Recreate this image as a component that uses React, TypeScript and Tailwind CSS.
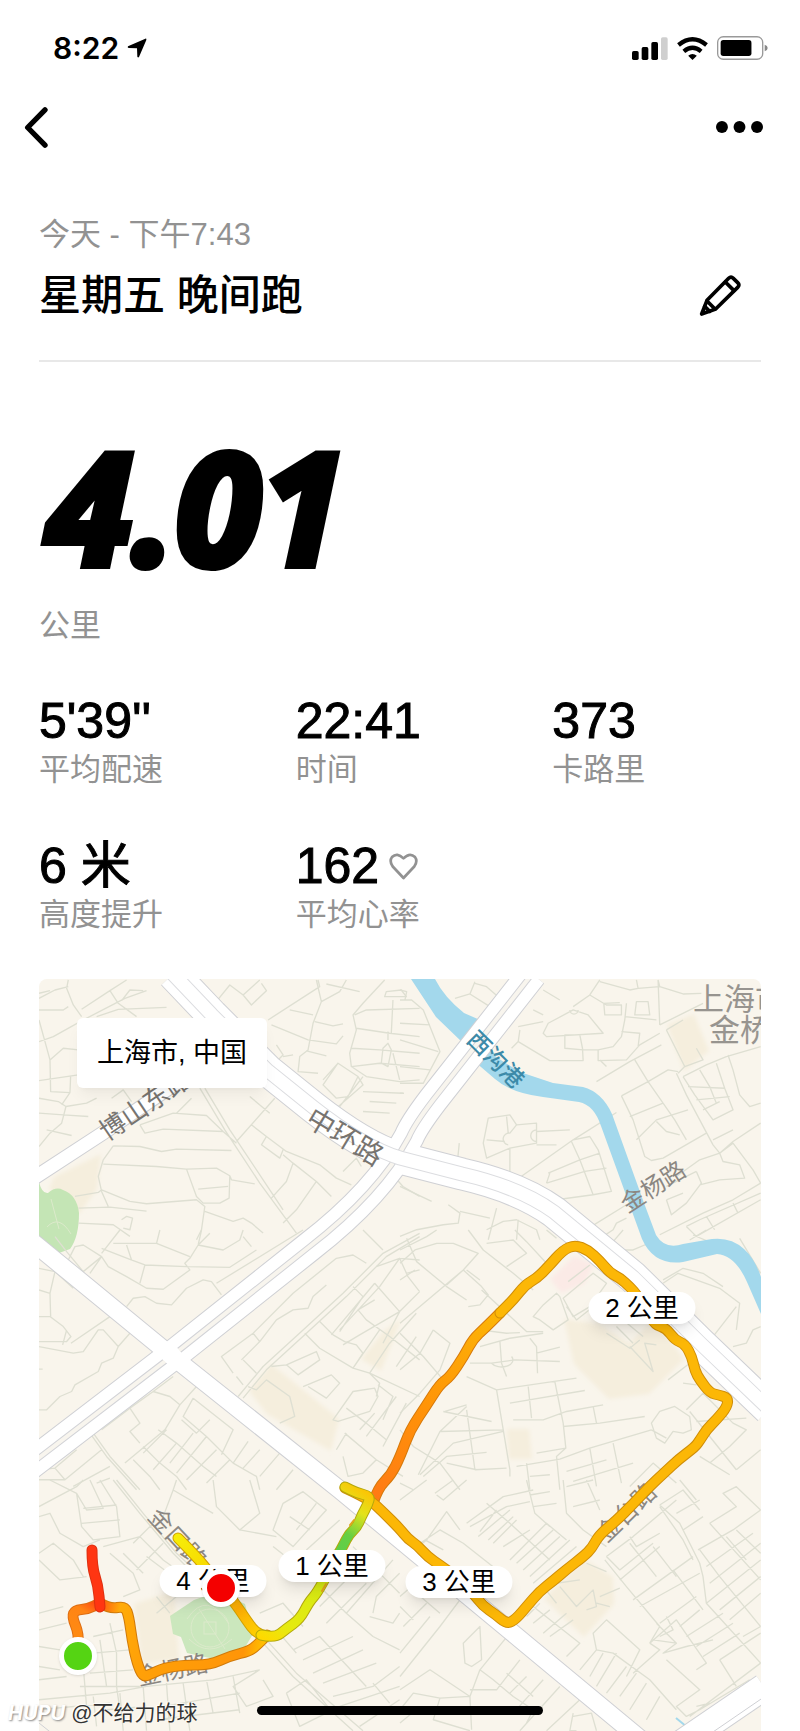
import React from "react";

const MAP_WIDTH = 722;
const MAP_HEIGHT = 752;

type Point = [number, number];

const stats = [
  { value: "5'39''", label: "平均配速" },
  { value: "22:41", label: "时间" },
  { value: "373", label: "卡路里" },
  { value: "6 米", label: "高度提升" },
  { value: "162", label: "平均心率", heart: true },
];

const kmMarkers = [
  { text: "4 公里", x: 174, y: 602 },
  { text: "1 公里", x: 293, y: 587 },
  { text: "2 公里", x: 603, y: 329 },
  { text: "3 公里", x: 420, y: 603 },
];

// Minor streets, one tile of the map per entry; tiles are drawn at a third of their own units.
const streetTiles = [
  {
    x: -9,
    y: -9,
    d: "M27 85L75 60L115 50M27 70L60 62M115 30L110 55L130 105L155 140M27 120L100 120L115 110M27 215L70 200L160 150L285 85L350 62M155 118L240 62L290 30M240 62L265 100L320 140M200 140L265 118L410 112M275 92L300 60L340 62M27 150L45 215L60 270L100 235L145 240M60 270L62 365L120 368L122 320M27 332L145 315M95 405L120 368M27 385L85 395L108 410M108 410L170 400L200 385M27 430L100 435L175 440M108 410L95 460L60 490L27 530M50 480L125 497M245 385L280 360L305 395M330 465L345 490L400 478L580 485M330 465L430 430L530 437L580 485L620 520M250 528L330 530L395 545L440 538L605 542M250 528L220 570L205 620L215 665L235 710M220 583L380 590L470 598L560 595L600 618L605 630L675 642M600 618L598 685L570 700L520 700L500 680L470 598M505 658L595 650M215 660L300 695L350 702L500 690L525 710L515 780L500 810M525 725L610 755L640 745L665 760L700 790M135 680L205 668L215 660M145 715L240 712L350 724M145 760L250 765L300 800M275 750L290 740L308 745L300 780L280 775M510 355L585 480L690 640L800 790M525 355L600 480L720 660L760 720M620 515L735 385M660 380L720 430M665 465L710 500L770 545L870 585L920 625L965 645M710 500L695 525L750 565L760 540M760 555L790 580L770 635L725 685M790 580L860 635L905 680M860 635L800 720L760 760M440 430L485 385M555 100L600 45L640 75L690 30M640 75L665 105L710 62L695 40M715 150L870 50L865 30M860 30L875 95L850 160L835 240L810 260L805 305L865 310M875 95L930 65L950 30M780 120L850 135M855 155L910 168L940 162M725 165L835 210L920 222L940 198M830 243L890 258M890 42L990 65M1065 30L1000 100L970 135L980 180L960 250L965 290L1010 320L1110 335L1170 330M975 135L1010 120L1170 115M980 175L1080 190L1170 200M965 235L1050 240L1170 250M965 290L1050 280L1170 290M1075 185L1075 210M1060 235L1055 280L1075 290L1085 240L1075 220ZM1090 90L1085 190M1090 250L1110 330M1065 80L1070 65L1115 60L1130 80ZM880 330L925 280L985 320L1000 345L920 415M925 280L880 345L920 385L955 380L985 320M1000 320L930 410M1000 365L1120 370M1020 395L1100 400M1000 425L1080 430M740 225L760 255L740 275M760 260L790 255M940 605L980 565L995 590M1085 610L1120 650L1170 680",
  },
  {
    x: 361,
    y: -9,
    d: "M0 90L35 90L70 120L120 245L70 340L0 340M0 60L20 65L15 90M0 160L90 165M0 210L115 245M0 290L90 300M0 370L12 370M165 85L210 72L225 35M210 72L270 110M225 40L260 50L300 85M430 60L480 90M400 120L430 135M355 170L430 155M360 180L355 215L450 272L550 272L548 235L540 195L495 195L495 235L550 240L595 240L595 272L680 270L720 225L780 190M335 235L355 215M430 190L445 160L520 120L565 135L610 190L440 200ZM510 120A12 12 0 1 0 535 120M520 110L570 75L600 30M570 75L620 105L665 105L665 135L615 135L612 100L660 98M710 30L715 55L690 60L600 35M715 55L780 50L850 72L905 70M775 30L780 165M780 50L775 30M710 95L745 95L750 135L705 135ZM680 100L675 150L665 200L640 230L595 240M675 140L770 150M665 185L720 190L715 230M600 270L620 290M780 165L860 125L910 100M800 180L850 150M800 180L855 290L835 310M855 290L910 270L890 235M590 335L690 275L785 225M705 270L745 335L790 400M665 378L745 335L805 300L835 305M665 378L700 450L735 560L755 572L790 565L920 490M690 440L790 400L825 450L860 510M710 510L770 450L865 420M770 455L800 485L840 495M830 310L860 375L900 450L940 525L960 550M850 320L920 285L980 260L1083 230M850 320L885 375L940 450L1000 420L975 355L950 280M900 300L930 350L950 400M865 350L975 355M890 390L990 380M910 420L960 395M985 255L1000 300L1020 375L1050 410L1083 400M1083 460L1000 515L960 550L900 570L830 620M940 510L1000 480M960 550L1000 520L1060 600L1083 640M960 550L970 575L1020 585L1035 625L960 630L900 645M1083 640L1000 690L910 730L780 795M890 605L905 640L860 700L815 735L800 690M890 605L800 650M800 690L850 670M860 770L900 750L1083 670M860 770L890 800L1083 690M920 740L945 780M1000 700L1015 730M250 520L265 445L330 435L350 465L410 460L410 520L330 535L260 565ZM260 510L315 515M320 440L325 490M350 465L330 490A15 15 0 1 0 325 525M410 480A15 15 0 1 0 410 515M410 485L510 480M410 525L470 525M330 535L330 610L345 630M178 520L172 580M350 630L520 510L650 428M515 515L540 570L580 675M520 510L570 500L595 540L635 665L580 675L470 690M445 610L540 570L600 550M440 640L555 605L620 595M450 610L440 640M0 650L95 695M145 705L180 730L175 760L130 765L50 780L0 800M180 725L270 745M290 715L265 810M260 780L310 755L350 750L410 780L420 810M355 750L350 810M575 770L680 705M610 800L640 780L650 760L680 745",
  },
  {
    x: -9,
    y: 251,
    d: "M27 115L75 125L60 190L62 260L27 260M75 125L130 175M27 180L60 190M60 260L100 290L123 320L110 335L27 335M27 350L130 370L160 365L205 300L220 300L265 350M110 300L98 345M123 340L240 260M300 310L265 350L250 385L215 400L205 425L135 465L125 485L90 500L50 540L27 540M27 418L38 418M75 20L110 65L160 125L215 80M110 100L135 50L160 45L215 80L235 110L290 140L350 175L400 178L480 120L465 100L480 85L505 45L515 0M215 70L270 0M180 130L215 80M215 55L300 88L345 105L330 160M345 105L470 110L600 112L680 60M290 45L305 90M250 40L380 40L480 80M390 0L380 40M505 45L580 60L630 30L640 0M505 45L540 10M640 20L665 50M290 230L310 205L345 200L380 220L425 225L470 175L520 150L545 155L575 195M560 160L820 0M430 440L370 485L300 535L215 600M370 485L420 500L450 525M500 470L450 525L405 600L285 700M300 535L330 580L300 605L330 640M490 505L610 600L575 675M490 505L460 560L530 620L610 700L680 740L690 780M455 570L500 610L540 570M385 600L440 640L520 710L560 740M340 650L390 700L440 740L470 780M310 690L360 740L390 780M410 600L340 670M440 640L370 720M490 610L420 700M530 620L440 730M560 660L470 750M600 690L530 760M180 610L230 680L320 780M190 610L240 680L330 780M27 720L75 715L140 660M75 715L105 750L215 660M130 770L240 710M27 750L105 750M200 760L240 745M610 700L655 635M640 715L690 660M690 740L750 670M740 780L790 720M625 500L700 410L820 300L940 190L1060 70L1170 10M640 505L710 420L830 310L950 200L1070 80L1170 20M610 430L575 380L670 310L790 190L920 85L970 75L1010 100M635 390L690 335L740 270L790 240L835 235L850 200L890 165M670 310L690 335M640 390L680 430M725 410L770 405L860 365L870 390L805 435L770 405M820 470L905 435L930 460L890 505L835 470M620 440L640 465M870 275L910 315L945 335L980 345L1000 370L970 415M1000 0L1060 60M970 170L1000 200L930 305M905 315L1035 160M1035 160L1110 245L1060 340M940 345L990 315L1110 245L1170 185M1035 210L985 240L1010 270L1080 320L1170 390M970 415L1050 300M1040 110L1110 85L1135 140L1170 185M1110 85L1170 90M1110 85L1050 170L930 300M1170 120L1130 130M825 310L870 355L970 415L1020 430L1170 500M1020 430L1080 340L1160 250M1100 410L1160 320M1045 465L1090 500L1060 570M910 570L970 485L1035 475L1045 500L1020 545L925 575ZM950 535L1010 580L1070 630M990 600L1035 550M1010 620L1100 500M1060 650L1130 520M945 610L1040 690L1120 740M940 680L955 740L1000 730L1040 690M920 660L950 610M655 470L680 480L710 450L780 500L795 560L750 580M1020 430L1050 460L1040 500",
  },
  {
    x: 361,
    y: 251,
    d: "M0 100L45 60L110 40L160 40L235 70L190 120L0 280M20 25L50 95L140 170L200 210M45 120L0 150M140 165L190 120L245 170L265 195L240 225L205 230M205 0L250 60L340 130L400 180M200 120L240 150M260 40L340 30L380 70L320 110M345 0L380 35L440 100M440 0L470 25M0 60L80 20L110 0M470 190L430 225L400 260L420 270L460 300L505 270L480 200ZM490 205L580 130L620 160L570 230L520 260ZM505 155L570 105M500 230L530 270L600 215M245 180L380 305L430 305M240 350L330 325L430 310M240 300L320 310L360 308M210 400L275 400L345 390L480 395M275 400A32 20 0 1 0 335 380M300 335L305 400L320 440M390 325L410 350L413 430M410 370L480 352M100 300L150 340L120 420L60 490L0 550M100 300L60 370L0 420M0 310L70 380L130 450M200 440L290 480L330 720L330 740M290 480L530 445M330 520L555 482M340 570L430 570L500 545L610 525M385 470L395 565M465 455L490 580L498 655L470 680L480 780M490 590L600 580L735 560M580 530L590 580M135 545L200 525M130 545L275 575M120 605L310 600M55 735L120 605L200 530M60 735L160 640L310 605M70 740L140 680L260 668M200 540L225 720L320 715M230 720L140 700M410 670L498 655M350 710L480 688L570 655L755 600M380 700L390 780M500 725L620 690M520 755L700 700M570 655L590 770M640 640L665 760M390 740L450 735M755 580L780 545L825 530L870 560L875 600L850 610L820 605L795 640L770 625ZM800 625L755 600M805 450L870 400M850 460L890 465M860 540L910 490L1000 580L1040 600L990 650L930 700M870 545L1010 720M890 575L1040 565M900 680L990 735M1010 720L1083 660M690 770L760 700L830 760M790 150L850 115L910 130L970 170M790 160L835 130L960 175L1020 220L1010 300M940 320L1010 230M1000 350L1040 340L1060 300L1083 290M870 30L920 0M880 15L940 40M1020 25L1083 130M650 60L700 60L770 30M670 0L640 35M620 310L690 355L720 330M690 350L760 425L735 340L770 345M650 290L700 340M670 270L730 320M0 600L40 650L120 700L180 780M0 760L40 780",
  },
  {
    x: -39,
    y: 501,
    d: "M117 80L230 20L250 0M150 0L230 40L260 90L310 85L270 0M117 110L150 100L180 160L250 200L300 180M230 40L245 140L280 180L360 170L350 80L300 0M250 85L350 75M245 130L360 120M117 220L160 190L220 240L250 290M117 240L180 300L260 290M310 200L420 170M330 220L400 280L420 330L370 350M340 0L420 100L520 220L600 300M350 0L430 100L530 220L650 330M400 190L460 130M410 270L490 190M370 220L430 280M420 170L490 240L560 290M440 230L520 290M470 400L530 350L600 350M470 350L510 400M640 0L650 80L720 150L780 100L750 0M530 0L520 30L640 100M520 30L490 110M720 150L830 170M850 70L910 35L980 90L880 200L820 150ZM890 150L950 70M870 110L930 150M820 200L960 310M920 210L1020 120M950 250L1060 170M960 320L1040 400L1120 470L1200 510M1040 400L1180 240M1060 200L1200 340M960 380L1050 290M980 430L1100 310M1120 400L1130 350L1200 280M1110 410L1180 430L1200 400M117 400L190 380M117 450L200 430M117 500L180 510M280 470L370 450M280 520L390 510M270 580L400 570M240 620L420 620M117 600L200 590M117 560L180 570M300 480L320 620M250 560L260 680M330 430L350 520L350 620L360 690M117 660L330 640L440 620L640 600L780 570M280 650L290 740M360 640L370 753M430 620L440 753M500 610L510 753M550 610L570 753M620 600L640 700M700 590L720 700M490 680L720 640M470 720L720 690M320 690L440 680M117 690L330 670M790 490L880 590L1060 753M800 480L890 580L1090 753M780 570L700 620L740 680L820 650L790 600M860 640L920 600L1000 700M860 640L900 740L980 700M880 510L960 470L1100 620M910 540L1060 470M940 580L1090 510M970 610L1130 550M1000 650L1120 620L1200 560M1020 680L1200 620M1080 740L1200 660M1120 610L1170 670M760 520L830 450M780 400L850 370L910 440M830 450L890 520",
  },
  {
    x: 361,
    y: 501,
    d: "M0 60L80 0M105 40L160 0M110 45L130 60L200 0M0 180L30 210L120 150L190 190L330 300M80 180L140 95L180 150M75 180L130 210M30 220L80 180M200 130L310 50L400 30M210 140L320 80L390 65M235 170L330 90M265 180L340 110M260 70L330 130L450 240M240 155L290 90M280 190L350 120M310 200L390 150M330 240L440 130L500 180M350 250L460 150M370 270L480 170M390 290L510 180M400 310L530 200M380 0L405 100L450 140M390 45L450 35M400 80L470 70M490 0L500 100L550 150L620 200M500 20L580 0M520 80L600 60M560 0L600 90M620 230L700 170L830 60M615 240L680 320L780 440L750 490M620 230L660 270L760 190M700 360L880 230M720 380L900 280M780 430L890 350M660 300L780 200M690 170L710 200L780 160M780 75L850 30L900 90M780 75L840 130L900 250L910 290L920 370L1083 550M830 100L900 60M850 150L910 110M780 80L850 180L880 240M690 190L770 290M760 200L830 290M820 270L910 390M895 210L1000 150L1083 90M900 210L960 290L1083 440M930 130L1010 80L970 40L1010 20L1083 90M930 130L1083 300M920 260L1060 160M930 310L1083 190M920 370L1083 240M960 390L1083 290M990 420L1083 340M1030 470L1083 440M980 170L1040 240M1010 150L1083 220M840 0L890 60M560 250L620 275M470 310L540 300M480 320L530 380L580 330L590 380L560 390M600 350L660 325M590 370L630 380M430 320L470 370M400 380L540 490L500 530M380 410L420 370M400 430L450 390M430 460L500 400M450 470L520 420M620 420L580 460L590 510L540 570M580 460L620 420L720 510L680 590M590 510L640 520L750 600L830 690M610 520L570 590M650 520L590 620M680 560L620 640M710 580L660 650M740 610L690 690M780 650L740 720M750 490L830 420L920 550L890 570M750 490L780 510L700 580M770 430L830 490L760 480M800 410L820 450L780 470M840 440L900 390M860 470L970 400M890 500L1000 430M910 530L1020 460M830 490L790 520L860 500L940 480M800 540L900 630L830 680L860 710L900 690M960 540L1010 620M960 540L1083 460M900 690L1050 600M890 680L930 670M870 710L1083 550M190 490L210 470L240 440L245 540L215 560L195 550ZM0 590L120 440L180 360M0 520L90 410M10 440L80 370M0 380L40 420M50 340L120 400M0 350L80 280M240 570L330 460M240 570L210 650L215 750M240 570L280 600L340 650L400 690M0 630L90 570L210 650L120 655L40 640L0 690M210 630L290 630L360 540M320 580L400 650M380 590L330 640M430 600L340 700M480 620L360 753M540 660L440 753M520 700L510 753L530 753M520 710L575 700L590 753M120 655L100 720L210 753M400 690L380 730M0 730L60 680",
  },
];

// Rounds a track off by drawing curves between the middles of its legs.
function smooth(points: Point[]) {
  const last = points[points.length - 1];
  let d = `M${points[0][0]} ${points[0][1]}`;
  for (let i = 1; i < points.length - 1; i++) {
    const [x, y] = points[i];
    const [nx, ny] = points[i + 1];
    d += `Q${x} ${y} ${(x + nx) / 2} ${(y + ny) / 2}`;
  }
  return `${d}L${last[0]} ${last[1]}`;
}

// Route pieces, in the order in which they are laid over one another.
const routePieces: { stroke: string; edge: string; points: Point[] }[] = [
  {
    stroke: "url(#lead)",
    edge: "#dd6c10",
    points: [[39, 665], [40, 655], [33, 638], [36, 631], [49, 630], [61, 624]],
  },
  {
    stroke: "url(#low)",
    edge: "#d07a0a",
    points: [[61, 624], [71, 630], [86, 627], [90, 638], [93, 661], [98, 684], [104, 698], [112, 695], [125, 689], [145, 686], [171, 686], [191, 677], [211, 672], [219, 665], [228, 656]],
  },
  {
    stroke: "#ff3512",
    edge: "#dd3010",
    points: [[53, 571], [53, 588], [59, 606], [61, 628]],
  },
  {
    stroke: "url(#finish)",
    edge: "#d0a000",
    points: [[139, 559], [158, 578], [174, 598], [194, 621], [208, 642], [217, 654], [228, 657]],
  },
  {
    stroke: "url(#north)",
    edge: "#d6790a",
    points: [[334, 524], [339, 509], [352, 496], [361, 478], [371, 451], [387, 427], [401, 405], [411, 398], [425, 377], [434, 360], [446, 349], [461, 334]],
  },
  {
    stroke: "#fcb706",
    edge: "#cf8d08",
    points: [[306, 509], [330, 520], [344, 533], [361, 550], [369, 560], [378, 566], [389, 578], [401, 586], [417, 598], [434, 614], [444, 627], [456, 635], [468, 645], [477, 640], [488, 627], [501, 612], [514, 602], [528, 590], [545, 577], [553, 569], [560, 556], [577, 542], [594, 525], [610, 508], [625, 494], [640, 480], [656, 468], [661, 461], [668, 450], [678, 440], [688, 428], [689, 419], [680, 416], [671, 414], [661, 401], [656, 392], [653, 378], [646, 365], [636, 361], [627, 349], [616, 346], [607, 330], [598, 316], [591, 308], [581, 299], [571, 294], [561, 282], [549, 271], [536, 266], [524, 271], [509, 288], [498, 299], [486, 306], [475, 320], [461, 334]],
  },
  {
    stroke: "url(#mid)",
    edge: "#b3a80c",
    points: [[222, 656], [236, 659], [247, 650], [261, 640], [270, 623], [278, 614], [290, 592], [304, 567], [310, 555], [318, 548], [323, 536], [329, 525], [331, 517], [318, 514], [306, 508]],
  },
];

const roadPaths = {
  boshan: "M-5 199L64 154L108 124L161 88",
  north: "M-20 494L138 373L270 268Q340 214 370 158Q375 146 394 121L493 -5",
  south: "M-10 260L129 374L301 511L470 651L605 763",
  ring: "M134 -5L173 36L228 91L274 128Q325 168 361 179L423 195Q480 208 515 233L594 298L661 364L730 430",
  corner: "M640 766L725 708",
};

function StatusBar() {
  return (
    <div className="flex h-24 items-center justify-between pl-[53px] pr-8">
      <div className="flex items-center gap-2">
        <span className="font-['Inter',sans-serif] text-[30px] font-semibold leading-9">8:22</span>
        <svg viewBox="0 0 60 60" className="size-5" aria-hidden="true">
          <path d="M3 25L55 2Q59 1 58 6L36 57Q33 60 31 56L30 31L5 30Q0 28 3 25Z" fill="#000" />
        </svg>
      </div>
      <div className="flex items-center gap-[9px]">
        <svg viewBox="0 0 108 69" className="h-[23px] w-9" aria-hidden="true">
          <rect x="0" y="42" width="20" height="27" rx="5" />
          <rect x="29" y="30" width="20" height="39" rx="5" />
          <rect x="58" y="15" width="20" height="54" rx="5" />
          <rect x="87" y="1" width="20" height="68" rx="5" fill="#cfcfcf" />
        </svg>
        <svg viewBox="0 0 92 69" className="h-[23px] w-[31px]" aria-hidden="true">
          <g fill="none" stroke="#000" strokeWidth="13">
            <path d="M4 24Q46 -10 88 24" />
            <path d="M20 43Q46 22 72 43" />
          </g>
          <path d="M33 56Q46 46 59 56L46 69Z" />
        </svg>
        <svg viewBox="0 0 154 72" className="h-6 w-[51px]" aria-hidden="true">
          <rect x="2" y="2" width="136" height="68" rx="17" fill="none" stroke="#999" strokeWidth="4" />
          <rect x="11" y="12" width="93" height="48" rx="8" />
          <path d="M144 26Q153 29 153 36Q153 43 144 46Z" fill="#888" />
        </svg>
      </div>
    </div>
  );
}

function RunMap() {
  return (
    <section className="relative w-full overflow-hidden rounded-t-lg bg-[#f9f5ec]">
      <svg
        viewBox="0 0 722 752"
        className="block w-full font-['Noto_Sans_CJK_SC',sans-serif]"
        role="img"
        aria-label="跑步路线"
      >
        <defs>
          <filter id="soft" x="-20%" y="-20%" width="140%" height="140%">
            <feGaussianBlur stdDeviation="2" />
          </filter>
          <linearGradient id="lead" gradientUnits="userSpaceOnUse" x1="36" y1="665" x2="61" y2="625">
            <stop offset="0" stopColor="#ff8c12" />
            <stop offset="0.7" stopColor="#ff8414" />
            <stop offset="1" stopColor="#ff4512" />
          </linearGradient>
          <linearGradient id="low" gradientUnits="userSpaceOnUse" x1="61" y1="626" x2="228" y2="656">
            <stop offset="0" stopColor="#ff5510" />
            <stop offset="0.12" stopColor="#ffab08" />
            <stop offset="0.3" stopColor="#ffa008" />
            <stop offset="0.88" stopColor="#ff9508" />
            <stop offset="1" stopColor="#ffc400" />
          </linearGradient>
          <linearGradient id="finish" gradientUnits="userSpaceOnUse" x1="139" y1="559" x2="226" y2="658">
            <stop offset="0" stopColor="#f6ec08" />
            <stop offset="0.35" stopColor="#f8d800" />
            <stop offset="0.7" stopColor="#fbab05" />
            <stop offset="1" stopColor="#ffd800" />
          </linearGradient>
          <linearGradient id="north" gradientUnits="userSpaceOnUse" x1="335" y1="519" x2="450" y2="321">
            <stop offset="0" stopColor="#ff7a14" />
            <stop offset="0.45" stopColor="#ff9308" />
            <stop offset="1" stopColor="#fcb706" />
          </linearGradient>
          <linearGradient id="mid" gradientUnits="userSpaceOnUse" x1="222" y1="658" x2="322" y2="508">
            <stop offset="0" stopColor="#ffd900" />
            <stop offset="0.12" stopColor="#e6ea10" />
            <stop offset="0.5" stopColor="#d2ea14" />
            <stop offset="0.64" stopColor="#5fce48" />
            <stop offset="0.74" stopColor="#66cf42" />
            <stop offset="0.88" stopColor="#e2e31c" />
            <stop offset="1" stopColor="#fcc404" />
          </linearGradient>
        </defs>

        <g fill="#f5eedd" filter="url(#soft)">
          <path d="M15 198L62 175L58 210L40 235L10 210Z" />
          <path d="M232 385L300 440L292 472L228 435L210 412Z" />
          <path d="M362 340L342 392L322 380L345 352Z" />
          <path d="M525 340L560 345L590 365L615 340L645 380L610 415L570 420L535 385Z" />
          <path d="M468 450L490 450L493 480L470 480Z" />
          <path d="M628 46L655 35L670 72L645 92Z" />
          <path d="M545 580L574 598L575 625L545 658L505 620Z" />
          <path d="M95 625L135 612L140 680L103 685Z" />
        </g>
        <path d="M511 300L535 277L555 285L545 305L522 314Z" fill="#fbeae6" filter="url(#soft)" />
        <path d="M0 203Q3 215 9 214Q17 207 24 211Q38 216 40 234Q40 258 31 270L20 274L0 258Z" fill="#c4e5b5" />
        <path d="M131 637L155 621L180 612L206 625L214 655L205 670L180 681L148 674L142 658L134 655Z" fill="#cbe7bd" />
        <g fill="none" stroke="#dceacb" strokeWidth="1">
          <path d="M148 640Q168 610 190 645M150 660Q170 680 193 660M160 630L186 670M8 248Q20 235 32 255M12 220L20 250" />
          <rect x="165" y="643" width="12" height="12" />
          <circle cx="171" cy="649" r="19" />
        </g>

        <g fill="none" stroke="#dedfd2" strokeWidth="4" strokeLinejoin="round">
          {streetTiles.map((tile) => (
            <g key={`${tile.x}-${tile.y}`} transform={`translate(${tile.x} ${tile.y}) scale(.333)`}>
              <path d={tile.d} />
            </g>
          ))}
        </g>

        <path
          d="M372 0L396 0Q405 18 425 34L441 41L443 54L457 78L481 93L514 104L544 108Q563 113 573 135L605 224L617 256Q626 271 644 265L667 261Q690 256 705 270Q716 280 722 298L722 335L708 303Q696 276 678 275L644 283Q615 287 603 260L562 147Q555 126 540 123L504 118Q472 114 456 100L435 82L424 64L397 38Z"
          fill="#a3d8ec"
        />
        <path d="M637 739L648 748" stroke="#a3d8ec" strokeWidth="2" />

        <g fill="none" strokeLinejoin="round">
          <g stroke="#cfd0d4">
            <path d={roadPaths.boshan} strokeWidth="15" />
            <path d={roadPaths.north} strokeWidth="31" />
            <path d={roadPaths.ring} strokeWidth="33" />
            <path d={roadPaths.south} strokeWidth="19" />
            <path d={roadPaths.corner} strokeWidth="28" />
          </g>
          <g stroke="#fff">
            <path d={roadPaths.boshan} strokeWidth="13" />
            <path d={roadPaths.north} strokeWidth="29" />
            <path d={roadPaths.ring} strokeWidth="31" />
          </g>
          <path d={roadPaths.north} stroke="#d2d3d7" strokeWidth="6" />
          <path d={roadPaths.north} stroke="#f8f5ee" strokeWidth="4" />
          <path d={roadPaths.ring} stroke="#dcdde0" strokeWidth="15" />
          <path d={roadPaths.ring} stroke="#fff" strokeWidth="13" />
          <g stroke="#fff">
            <path d="M126 382L140 371" strokeWidth="26" />
            <path d={roadPaths.south} strokeWidth="17" />
            <path d={roadPaths.corner} strokeWidth="26" />
          </g>
          <path d="M655 766L725 718M-5 740L20 760" stroke="#cfd0d4" strokeWidth="1" />
        </g>

        <g textAnchor="middle" dominantBaseline="central">
          <g fill="#777470" fontSize="26">
            <text transform="translate(105 124) rotate(-34)">博山东路</text>
            <text transform="translate(307 156) rotate(31)" fontSize="28">中环路</text>
          </g>
          <g fill="#8b8782" fontSize="24">
            <text transform="translate(613 206) rotate(-33)">金杨路</text>
            <text transform="translate(586 532) rotate(-44)">金台路</text>
            <text transform="translate(140 558) rotate(47)">金口路</text>
            <text transform="translate(133 689) rotate(-12)">金杨路</text>
          </g>
          <text transform="translate(458 79) rotate(45)" fill="#3c8aa8" fontSize="23" fontWeight="500">西沟港</text>
        </g>
        <g fill="#97948f" fontSize="31">
          <text x="654" y="31">上海市</text>
          <text x="670" y="62">金桥</text>
        </g>

        <g fill="none" strokeLinecap="round" strokeLinejoin="round">
          {routePieces.map((piece) => {
            const d = smooth(piece.points);
            return (
              <React.Fragment key={d}>
                <path d={d} stroke={piece.edge} strokeWidth="11" />
                <path d={d} stroke={piece.stroke} strokeWidth="9" />
              </React.Fragment>
            );
          })}
          <path d="M311 546L315 541M283 612L287 605" stroke="#e0a51c" strokeWidth="2" />
        </g>
      </svg>

      <div className="absolute left-[38px] top-[39px] flex h-[70px] w-[190px] items-center justify-center rounded-md bg-white text-[27px] leading-10 shadow-lg shadow-black/5">
        上海市, 中国
      </div>

      {kmMarkers.map((marker) => (
        <div
          key={marker.text}
          className="absolute flex h-8 w-[107px] -translate-x-1/2 -translate-y-1/2 items-center justify-center rounded-full bg-white text-[26px] leading-8 shadow-lg shadow-black/10"
          style={{ left: `${(marker.x / MAP_WIDTH) * 100}%`, top: `${(marker.y / MAP_HEIGHT) * 100}%` }}
        >
          {marker.text}
        </div>
      ))}

      <div
        className="absolute size-[38px] -translate-x-1/2 -translate-y-1/2 rounded-full border-[5px] border-white bg-[#f40000] shadow-sm"
        style={{ left: `${(182 / MAP_WIDTH) * 100}%`, top: `${(609 / MAP_HEIGHT) * 100}%` }}
      />
      <div
        className="absolute size-[38px] -translate-x-1/2 -translate-y-1/2 rounded-full border-[5px] border-white bg-[#55d413] shadow-sm"
        style={{ left: `${(39 / MAP_WIDTH) * 100}%`, top: `${(677 / MAP_HEIGHT) * 100}%` }}
      />
    </section>
  );
}

export default function App() {
  return (
    <div className="relative overflow-hidden bg-white font-['Liberation_Sans','Noto_Sans_CJK_SC',sans-serif] text-black">
      <StatusBar />

      <nav className="flex h-[62px] items-center justify-between pl-6 pr-[37px]">
        <button type="button" aria-label="返回">
          <svg viewBox="0 0 72 122" className="h-[41px] w-6" fill="none" stroke="#000" strokeWidth="16" strokeLinecap="round" strokeLinejoin="round">
            <path d="M63 8L11 61L63 114" />
          </svg>
        </button>
        <button type="button" aria-label="更多">
          <svg viewBox="0 0 142 36" className="h-3 w-[47px]">
            <circle cx="18" cy="18" r="18" />
            <circle cx="71" cy="18" r="18" />
            <circle cx="124" cy="18" r="18" />
          </svg>
        </button>
      </nav>

      <main className="px-[39px]">
        <header className="border-b-2 border-[#e8e8e8] pb-[35px] pt-[57px]">
          <p className="text-[31px] leading-10 text-[#929292]">今天 - 下午7:43</p>
          <div className="mt-3 flex items-center justify-between pr-5">
            <h1 className="text-[42px] font-medium leading-[58px]">星期五 晚间跑</h1>
            <button type="button" aria-label="编辑">
              <svg viewBox="0 0 126 126" className="size-[42px]" fill="none" stroke="#000" strokeWidth="11" strokeLinecap="round" strokeLinejoin="round">
                <path d="M8 117L24 76L89 10Q96 3 103 10L116 23Q123 30 116 37L50 102Z" />
                <path d="M79 21L105 47M24 78L48 102M17 94L32 109" />
              </svg>
            </button>
          </div>
        </header>

        <section className="pt-[67px]">
          <p className="pl-2 font-['Open_Sans',sans-serif] text-[154px] font-bold italic leading-[152px] [-webkit-text-stroke:8px_black]">4.01</p>
          <p className="mt-[25px] text-[31px] leading-10 text-[#929292]">公里</p>
        </section>

        <dl className="grid grid-cols-3 gap-x-12 gap-y-[47px] pb-[43px] pt-[47px]">
          {stats.map((stat) => (
            <div key={stat.label} className="flex flex-col-reverse">
              <dt className="text-[31px] leading-[42px] text-[#929292]">{stat.label}</dt>
              <dd className="flex h-14 items-center gap-[10px] text-[50px] leading-[56px] [-webkit-text-stroke:1px_black]">
                {stat.value}
                {stat.heart && (
                  <svg viewBox="0 0 86 80" className="h-[27px] w-[29px]" fill="none" stroke="#929292" strokeWidth="8" strokeLinejoin="round" aria-hidden="true">
                    <path d="M43 74L11 40Q0 24 9 12Q24 -3 43 16Q62 -3 77 12Q86 24 75 40Z" />
                  </svg>
                )}
              </dd>
            </div>
          ))}
        </dl>

        <RunMap />
      </main>

      <div className="absolute bottom-0.5 left-2 flex items-baseline gap-1.5 leading-8">
        <span className="font-['Inter',sans-serif] text-[20px] font-bold italic text-white [text-shadow:1px_1px_2px_#888]">HUPU</span>
        <span className="text-[21px] text-[#333] [text-shadow:-1px_-1px_1px_#fff]">@不给力的球</span>
      </div>
      <div className="absolute bottom-4 left-1/2 h-[9px] w-[286px] -translate-x-1/2 rounded-full bg-black" />
    </div>
  );
}
